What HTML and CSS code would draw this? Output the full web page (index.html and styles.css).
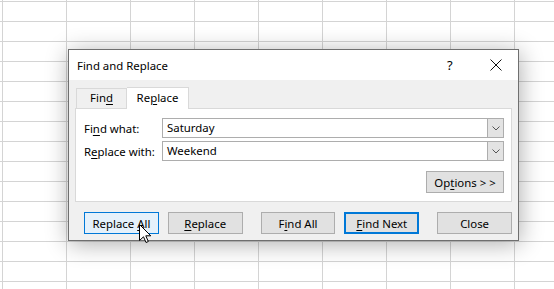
FILE: index.html
```html
<!doctype html>
<html lang="en">
  <head>
    <meta charset="UTF-8" />
    <title>Find and Replace</title>
    <link rel="stylesheet" href="styles.css">
  </head>
  <body>
    <div class="dialog">
      <div class="titlebar">
        <span class="title">Find and Replace</span>
        <span class="help">?</span>
        <span class="close-x">
          <svg width="12" height="12" viewBox="0 0 12 12">
            <path d="M0.5 0.5 L11.5 11.5 M11.5 0.5 L0.5 11.5" stroke="#111" stroke-width="1" fill="none" />
          </svg>
        </span>
      </div>

      <div class="body">
        <div class="tabs">
          <div class="tab">Fin<u>d</u></div>
          <div class="tab active">Re<u>p</u>lace</div>
        </div>

        <div class="panel">
          <div class="field">
            <label>Fi<u>n</u>d what:</label>
            <div class="combo">
              <span class="value">Saturday</span>
              <span class="drop">
                <svg width="8" height="5" viewBox="0 0 8 5"><path d="M0.5 0.5 L4 4 L7.5 0.5" stroke="#555" fill="none" /></svg>
              </span>
            </div>
          </div>
          <div class="field">
            <label>R<u>e</u>place with:</label>
            <div class="combo">
              <span class="value">Weekend</span>
              <span class="drop">
                <svg width="8" height="5" viewBox="0 0 8 5"><path d="M0.5 0.5 L4 4 L7.5 0.5" stroke="#555" fill="none" /></svg>
              </span>
            </div>
          </div>
          <div class="options-row">
            <button class="btn options">Op<u>t</u>ions &gt; &gt;</button>
          </div>
        </div>

        <div class="actions">
          <button class="btn hover">Replace <u>A</u>ll</button>
          <button class="btn"><u>R</u>eplace</button>
          <button class="btn wide-gap">F<u>i</u>nd All</button>
          <button class="btn default"><u>F</u>ind Next</button>
          <button class="btn wide-gap">Close</button>
        </div>
      </div>
    </div>

    <!-- mouse pointer over Replace All -->
    <svg class="pointer" width="13" height="20" viewBox="0 0 13 20">
      <path d="M0.5 0.5 L0.5 16.5 L4.5 12.8 L7 18.5 L9.3 17.5 L6.8 11.8 L11.8 11.8 Z" fill="#fff" stroke="#000" stroke-width="1" stroke-linejoin="miter" />
    </svg>
  </body>
</html>
```

FILE: styles.css
```css
* {
  box-sizing: border-box;
}
body {
  margin: 0;
  padding: 49px 0 0 68px;
  height: 289px;
  overflow: hidden;
  position: relative;
  background-color: #fff;
  background-image:
    linear-gradient(to right, #d4d4d4 1px, transparent 1px),
    linear-gradient(to bottom, #d4d4d4 1px, transparent 1px);
  background-size: 64px 20px;
  background-position: 2px 1px;
  font-family: "Noto Sans", "Open Sans", sans-serif;
  font-size: 11.4px;
  color: #000;
}
.dialog {
  width: 451px;
  height: 192px;
  background-color: #f0f0f0;
  border: 1px solid #6f6f6f;
  box-shadow: 1px 3px 22px rgba(0, 0, 0, 0.32);
}
.titlebar {
  height: 30px;
  background-color: #fff;
  display: flex;
  align-items: center;
  padding-left: 8px;
  font-size: 12px;
}
.title {
  flex: 1;
  font-size: 11.4px;
}
.help {
  width: 12px;
  margin-right: 31px;
  font-size: 13px;
}
.close-x {
  display: flex;
  margin-right: 16px;
}
.body {
  padding: 7px 6px 0 6px;
}
.tabs {
  display: flex;
  align-items: flex-end;
  margin-left: 1px;
  height: 22px;
  margin-bottom: -1px;
  position: relative;
  z-index: 1;
}
.tab {
  height: 20px;
  width: 51px;
  margin-bottom: 1px;
  border: 1px solid #d9d9d9;
  border-bottom: none;
  background-color: #f0f0f0;
  text-align: center;
  line-height: 18px;
}
.tab.active {
  height: 22px;
  width: 62px;
  margin-bottom: 0;
  background-color: #fff;
  border-left: none;
  line-height: 20px;
}
.panel {
  height: 94px;
  background-color: #fff;
  border: 1px solid #d9d9d9;
  padding: 9px 7px 8px 8px;
  display: flex;
  flex-direction: column;
  gap: 3px;
}
.field {
  display: flex;
  align-items: center;
  height: 20px;
}
.field label {
  width: 78px;
}
.combo {
  flex: 1;
  height: 20px;
  display: flex;
  border: 1px solid #adadad;
}
.combo .value {
  flex: 1;
  padding-left: 4px;
  line-height: 17px;
}
.drop {
  width: 17px;
  background-color: #e3e3e3;
  border: 1px solid #adadad;
  margin: -1px -1px -1px 0;
  display: flex;
  align-items: center;
  justify-content: center;
}
.options-row {
  display: flex;
  justify-content: flex-end;
  margin-top: 7px;
}
.btn {
  height: 22px;
  width: 75px;
  padding: 0;
  font-family: inherit;
  font-size: 11.4px;
  color: #000;
  background-color: #e1e1e1;
  border: 1px solid #adadad;
}
.btn.options {
  width: 78px;
}
.btn.hover {
  background-color: #e5f1fb;
  border-color: #0078d7;
}
.btn.default {
  border: 2px solid #0078d7;
}
.actions {
  display: flex;
  gap: 9px;
  padding-left: 9px;
  margin-top: 10px;
}
.actions .wide-gap {
  margin-left: 9px;
}
u {
  text-underline-offset: 2px;
}
.pointer {
  position: absolute;
  left: 139px;
  top: 224px;
}
```
